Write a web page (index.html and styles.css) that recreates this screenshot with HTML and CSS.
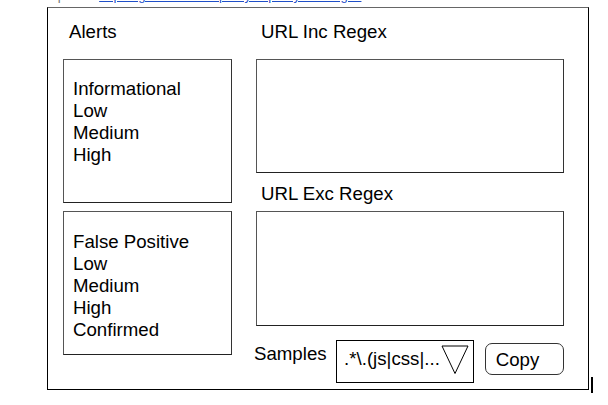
FILE: index.html
```html
<!DOCTYPE html>
<html>
<head>
<meta charset="utf-8">
<link rel="stylesheet" href="styles.css">
</head>
<body>
<div class="topline"><div class="topline-inner"><span class="pre">Input:</span> <a class="link" href="#">https://github.com/zaproxy/zaproxy/wiki/regex</a></div></div>
<div class="frame">
  <div class="col left">
    <div class="label">Alerts</div>
    <div class="box list first">
      <div>Informational</div>
      <div>Low</div>
      <div>Medium</div>
      <div>High</div>
    </div>
    <div class="box list second">
      <div>False Positive</div>
      <div>Low</div>
      <div>Medium</div>
      <div>High</div>
      <div>Confirmed</div>
    </div>
  </div>
  <div class="col right">
    <div class="label">URL Inc Regex</div>
    <div class="box area inc"></div>
    <div class="label exc-label">URL Exc Regex</div>
    <div class="box area exc"></div>
    <div class="samples">
      <span class="samples-label">Samples</span>
      <div class="dropdown">
        <span class="dd-text">.*\.(js|css|...</span>
        <svg class="dd-arrow" width="28" height="30" viewBox="0 0 28 30"><polygon points="1,1 27,1 14,28.5" fill="none" stroke="#000" stroke-width="1"/></svg>
      </div>
      <div class="copy">Copy</div>
    </div>
  </div>
  <span class="cursor"></span>
</div>
</body>
</html>
```
FILE: styles.css
```css
html, body {
  margin: 0;
  padding: 0;
  background: #fff;
}
body {
  font-family: "Liberation Sans", Arial, sans-serif;
  color: #000;
  width: 608px;
  height: 405px;
  overflow: hidden;
}
.topline {
  height: 7px;
  overflow: hidden;
  padding-left: 47px;
  font-size: 13px;
  line-height: 14px;
  color: #777;
}
.topline-inner {
  margin-top: -11px;
  white-space: nowrap;
}
.topline .link {
  color: #1f4fc8;
  text-decoration: underline;
  margin-left: 16px;
}
.frame {
  position: relative;
  margin-left: 47px;
  width: 542px;
  height: 383px;
  box-sizing: border-box;
  border: 1px solid #000;
  border-top-color: #666;
  padding: 13px 0 0 15px;
  display: flex;
  gap: 24px;
  font-size: 18.67px;
  line-height: 22px;
}
.col {
  display: flex;
  flex-direction: column;
}
.left { width: 169px; }
.right { width: 308px; }
.label {
  padding-left: 6px;
  height: 22px;
  white-space: nowrap;
}
.right .label { padding-left: 5px; }
.box {
  box-sizing: border-box;
  border: 1px solid #555;
  border-bottom-color: #222;
  border-right-color: #333;
}
.list {
  height: 144px;
  padding: 18px 0 0 9px;
}
.first { margin-top: 16px; }
.second { margin-top: 8px; padding-top: 19px; }
.area.inc {
  margin-top: 16px;
  height: 114px;
}
.exc-label { margin-top: 10px; }
.area.exc {
  margin-top: 6px;
  height: 115px;
}
.samples {
  margin-top: 14px;
  margin-left: -2px;
  display: flex;
  align-items: flex-start;
}
.samples-label {
  margin-top: 3px;
  width: 83px;
}
.dropdown {
  box-sizing: border-box;
  width: 139px;
  height: 43px;
  border: 1px solid #000;
  display: flex;
  align-items: flex-start;
  padding: 4px 4px 0 7px;
}
.dd-text {
  margin-top: 3px;
  white-space: nowrap;
}
.dd-arrow {
  margin-left: auto;
  display: block;
  flex: none;
}
.copy {
  box-sizing: border-box;
  margin-left: 11px;
  margin-top: 3px;
  width: 80px;
  height: 32px;
  border: 1px solid #333;
  border-radius: 7px;
  padding: 5px 0 0 10px;
}
.cursor {
  position: absolute;
  left: 543px;
  top: 369px;
  width: 2px;
  height: 16px;
  background: #000;
}
```
